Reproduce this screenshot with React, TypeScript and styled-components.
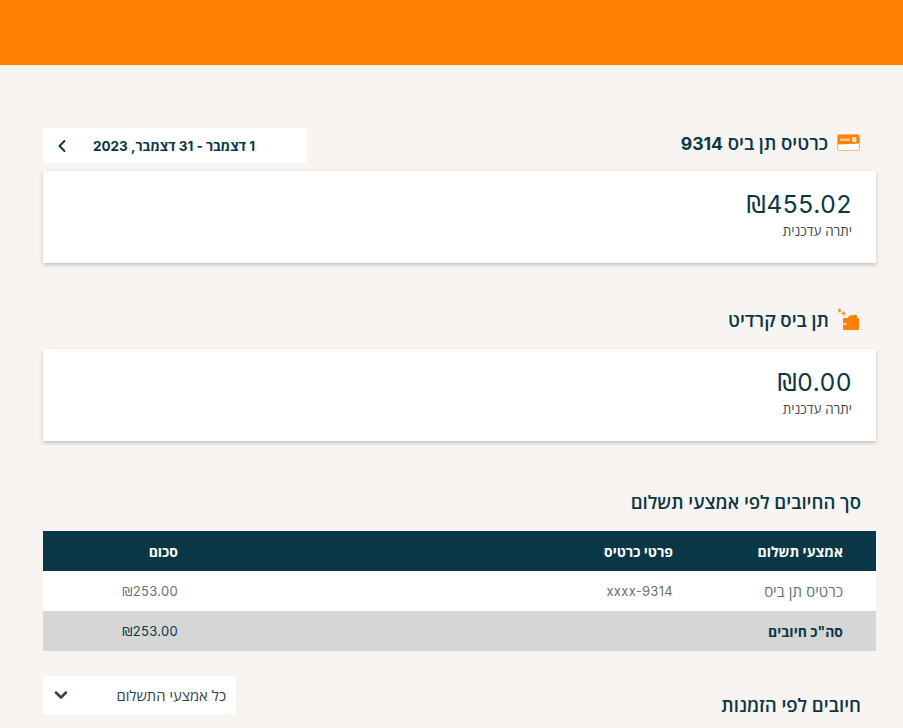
import styled, { createGlobalStyle } from 'styled-components';
import { ChevronDown, ChevronLeft } from 'lucide-react';

const GlobalStyle = createGlobalStyle`
    html, body {
        margin: 0;
        height: 728px;
        overflow: hidden;
        background: #f8f4f1;
    }
    body {
        font-family: "Inter", "Open Sans", "Noto Sans", sans-serif;
        color: #0a3746;
    }
`;

const TopBar = styled.div`
    height: 65px;
    background: #ff7f00;
`;

const Page = styled.div`
    direction: rtl;
    display: flex;
    flex-direction: column;
    padding: 63px 27px 0 43px;
`;

const SectionHead = styled.div<{ $height: number; $gap: number }>`
    display: flex;
    align-items: center;
    justify-content: space-between;
    height: ${p => p.$height}px;
    margin-bottom: ${p => p.$gap}px;
`;

const Title = styled.div<{ $lift?: number }>`
    display: flex;
    align-items: center;
    column-gap: 9px;
    padding-right: 16px;
    padding-bottom: ${p => p.$lift ?? 0}px;
    font-size: 18.6px;
    font-weight: 600;
`;

const Digits = styled.span`
    font-size: 17.6px;
    font-weight: 700;
`;

const Heading = styled.div<{ $drop?: number }>`
    padding-right: 15px;
    padding-top: ${p => p.$drop ?? 0}px;
    font-size: 18.6px;
    font-weight: 600;
`;

const DateBox = styled.div`
    width: 263px;
    height: 35px;
    box-sizing: border-box;
    padding: 0 51px 0 9px;
    background: #fff;
    display: flex;
    align-items: center;
    justify-content: space-between;
    font-size: 13.5px;
    font-weight: 700;
`;

const Select = styled.div`
    width: 193px;
    height: 38px;
    box-sizing: border-box;
    padding: 0 10px 0 8px;
    background: #fff;
    display: flex;
    align-items: center;
    justify-content: space-between;
    font-size: 14.7px;
    color: #33424a;
`;

const Card = styled.div<{ $gap: number }>`
    height: 92px;
    box-sizing: border-box;
    padding: 17px 24px 0;
    margin-bottom: ${p => p.$gap}px;
    background: #fff;
    box-shadow: 0 2px 4px rgba(0, 0, 0, 0.22);
`;

const Amount = styled.div`
    font-size: 24.4px;
    line-height: 32px;
    letter-spacing: 0.7px;
`;

const Shekel = styled.span`
    font-family: "DejaVu Sans", sans-serif;
    font-weight: 400;
`;

const AmountLabel = styled.div`
    margin-top: 1px;
    font-size: 13.4px;
    line-height: 18px;
    color: #3d4a50;
`;

const Row = styled.div<{ $kind: 'head' | 'body' | 'total' }>`
    display: grid;
    grid-template-columns: 170px 495px 168px;
    height: 40px;
    align-items: center;
    font-size: ${p => (p.$kind === 'body' ? 15 : 14)}px;
    font-weight: ${p => (p.$kind === 'body' ? 400 : 700)};
    color: ${p => (p.$kind === 'head' ? '#fff' : p.$kind === 'body' ? '#6b6f72' : '#0a3746')};
    background: ${p => (p.$kind === 'head' ? '#0a3746' : p.$kind === 'body' ? '#fff' : '#d6d6d6')};
`;

const Cell = styled.div<{ $number?: boolean }>`
    padding-right: 33px;
    font-size: ${p => (p.$number ? '13px' : 'inherit')};
    font-weight: ${p => (p.$number ? 400 : 'inherit')};
    letter-spacing: ${p => (p.$number ? '0.3px' : 'normal')};
`;

const Spacer = styled.div`
    height: 25px;
`;

const CardIcon = () => (
    <svg width="23" height="17" viewBox="0 0 23 17">
        <rect x="0.5" y="0.5" width="22" height="16" rx="1.5" fill="#fff" stroke="#ffb066" />
        <path d="M1 2a1 1 0 0 1 1-1h19a1 1 0 0 1 1 1v7.5L1 10.5z" fill="#ff7f00" />
        <rect x="3" y="4.5" width="10" height="2.5" fill="#ffc68f" />
        <rect x="15" y="3" width="4.5" height="5" rx="1" fill="#ffdcb8" />
    </svg>
);

const WalletIcon = () => (
    <svg width="22" height="23" viewBox="0 0 22 23">
        <path d="M1.5 0.5v4M-0.5 2.5h4" stroke="#ff8f26" strokeWidth="1.6" />
        <path d="M5.5 3.5v4M3.5 5.5h4" stroke="#ff8f26" strokeWidth="1.6" />
        <path d="M10 10l1-2.2 6.5-1a1.2 1.2 0 0 1 1.5 1.2v2z" fill="#ff7f00" />
        <path d="M6 10h14a1 1 0 0 1 1 1v10a1 1 0 0 1-1 1H6a1 1 0 0 1-1-1v-4h3.5v-1.6H5V11a1 1 0 0 1 1-1z" fill="#ff7f00" />
    </svg>
);

const App = () => (
    <>
        <GlobalStyle />
        <TopBar />
        <Page>
            <SectionHead $height={35} $gap={8}>
                <Title $lift={7}>
                    <CardIcon />
                    <span>כרטיס תן ביס <Digits>9314</Digits></span>
                </Title>
                <DateBox>
                    <span>1 דצמבר - 31 דצמבר, 2023</span>
                    <ChevronLeft size={20} strokeWidth={2.4} />
                </DateBox>
            </SectionHead>
            <Card $gap={41}>
                <Amount><Shekel>₪</Shekel>455.02</Amount>
                <AmountLabel>יתרה עדכנית</AmountLabel>
            </Card>
            <SectionHead $height={30} $gap={15}>
                <Title>
                    <WalletIcon />
                    <span>תן ביס קרדיט</span>
                </Title>
            </SectionHead>
            <Card $gap={47}>
                <Amount><Shekel>₪</Shekel>0.00</Amount>
                <AmountLabel>יתרה עדכנית</AmountLabel>
            </Card>
            <SectionHead $height={26} $gap={17}>
                <Heading>סך החיובים לפי אמצעי תשלום</Heading>
            </SectionHead>
            <Row $kind="head">
                <Cell>אמצעי תשלום</Cell>
                <Cell>פרטי כרטיס</Cell>
                <Cell>סכום</Cell>
            </Row>
            <Row $kind="body">
                <Cell>כרטיס תן ביס</Cell>
                <Cell $number>xxxx-9314</Cell>
                <Cell $number><Shekel>₪</Shekel>253.00</Cell>
            </Row>
            <Row $kind="total">
                <Cell>סה"כ חיובים</Cell>
                <Cell />
                <Cell $number><Shekel>₪</Shekel>253.00</Cell>
            </Row>
            <Spacer />
            <SectionHead $height={38} $gap={0}>
                <Heading $drop={18}>חיובים לפי הזמנות</Heading>
                <Select>
                    <span>כל אמצעי התשלום</span>
                    <ChevronDown size={20} strokeWidth={3} />
                </Select>
            </SectionHead>
        </Page>
    </>
);

export default App;
